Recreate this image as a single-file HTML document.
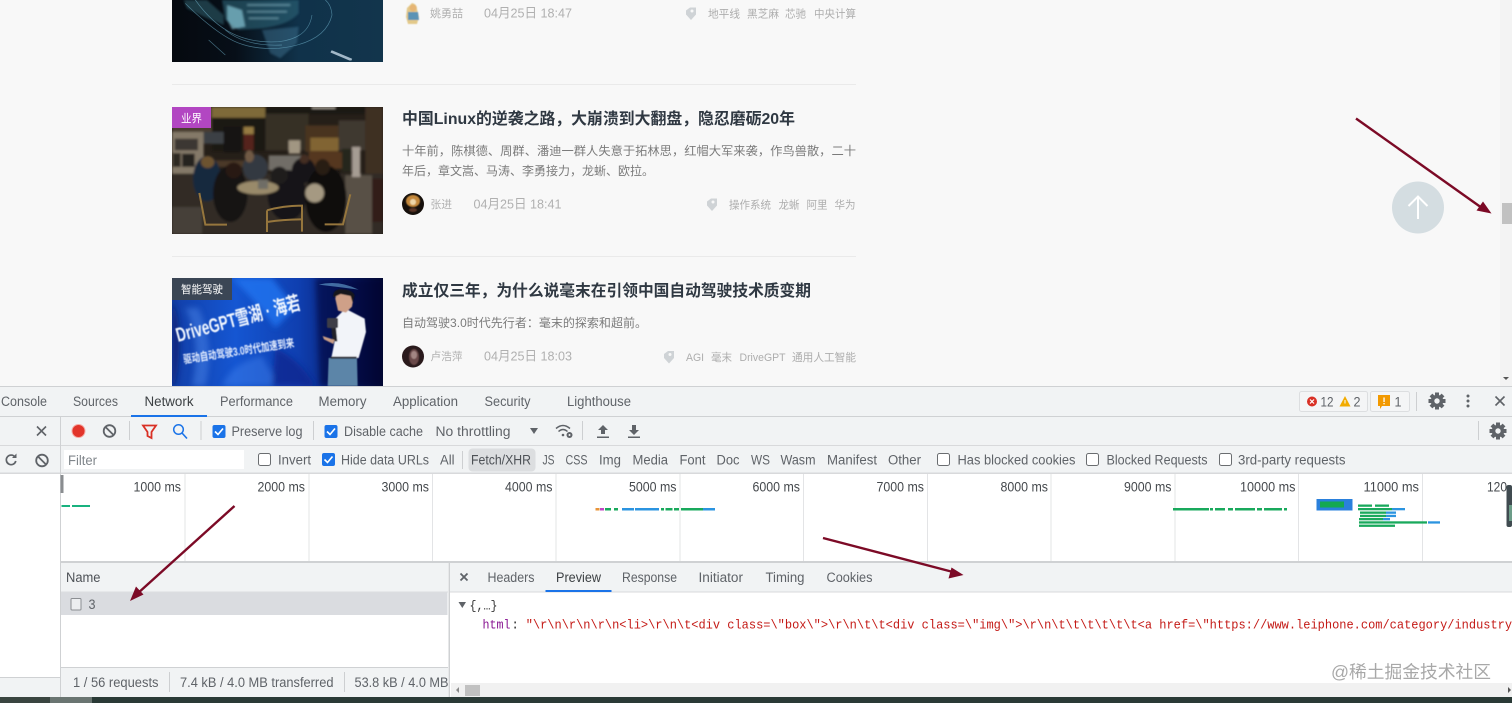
<!DOCTYPE html>
<html lang="zh"><head><meta charset="utf-8"><title>DevTools</title>
<style>
html,body{margin:0;padding:0;width:1512px;height:703px;overflow:hidden;background:#f8f8f8}
svg{display:block;filter:blur(.3px)}
text{font-family:"Liberation Sans","Noto Sans CJK SC",sans-serif;white-space:pre}
.t{font-size:13.5px;fill:#4d5156}
.g{font-size:13.5px;fill:#5f6368}
.o{font-size:13.5px;fill:#45494d}
.m{font-size:13px;font-family:"Liberation Mono",monospace}
.h{font-size:16px;font-weight:700;fill:#2f3842}
.d{font-size:12px;fill:#7b7b7b}
.n{font-size:11px;fill:#b0b0b0}
.dt{font-size:13px;fill:#b0b0b0}
.tg{font-size:11px;fill:#adadad}
.b{font-size:11px;fill:#fff}
</style></head><body>
<svg width="1512" height="703" viewBox="0 0 1512 703" xmlns="http://www.w3.org/2000/svg">
<defs>
<filter id="b1" x="-5%" y="-5%" width="110%" height="110%"><feGaussianBlur stdDeviation="3.200"/></filter>
<filter id="b2" x="-20%" y="-20%" width="140%" height="140%"><feGaussianBlur stdDeviation="9"/></filter>
<filter id="b3" x="-5%" y="-5%" width="110%" height="110%"><feGaussianBlur stdDeviation=".45"/></filter>
<clipPath id="c1"><rect x="172" y="0" width="211" height="62"/></clipPath>
<clipPath id="c2"><rect x="172" y="107" width="211" height="127"/></clipPath>
<clipPath id="c3"><rect x="172" y="278" width="211" height="108"/></clipPath>
<clipPath id="a1"><circle cx="413" cy="204" r="11"/></clipPath>
<clipPath id="a2"><circle cx="413" cy="356.500" r="11"/></clipPath>
<clipPath id="st"><rect x="60" y="668" width="388" height="29"/></clipPath>
<linearGradient id="bl" x1="0" y1="0" x2="1" y2="0"><stop offset="0" stop-color="#123fa8"/><stop offset=".3" stop-color="#1556d2"/><stop offset=".6" stop-color="#0f3fb0"/><stop offset=".8" stop-color="#0a237a"/><stop offset="1" stop-color="#040b34"/></linearGradient>
<linearGradient id="dk" x1="0" y1="0" x2="1" y2="0"><stop offset="0" stop-color="#05090f"/><stop offset=".3" stop-color="#070f18"/><stop offset=".6" stop-color="#10324a"/><stop offset="1" stop-color="#12354c"/></linearGradient>
<path id="tag" d="M-5-3L-1-6H5V1L0 6.500-5 1z" fill="#cfd3d6"/>
</defs>

<rect width="1512" height="703" fill="#f8f8f8"/>
<rect x="1500" y="0" width="12" height="386" fill="#f3f3f3"/>
<rect x="1502" y="203" width="10" height="21" fill="#c1c1c1"/>
<path d="M1503 377h6l-3 3z" fill="#555"/>

<!-- image 1 -->
<g clip-path="url(#c1)">
<rect x="172" y="0" width="211" height="62" fill="url(#dk)"/>
<g transform="translate(172 0) scale(.3333)" fill="none">
<g filter="url(#b1)">
<path d="M270 90l110-10-5 50-50 45-30-15z" fill="#3d7290" opacity=".5"/>
<path d="M35 0h70l50 45v30l-60-25-50-25z" fill="#2d5a68" opacity=".6"/>
<path d="M150 0h230v40q-30 35-110 45l-70 5-40-30z" fill="#2f6678" opacity=".6"/>
<path d="M165 15l45 15 10 50-40 8-15-30z" fill="#8fd0de" opacity=".65"/>
<path d="M225 15h130M225 35h120M230 55h90" stroke="#a5dbe6" stroke-width="5" opacity=".45"/>
</g>
<g stroke="#6fb0c8" stroke-width="2" opacity=".6" filter="url(#b3)">
<path d="M40 10q70 70 130 105t150 30q140-15 160-100-2-30-20-45"/>
<path d="M70 0q50 70 110 100t140 25q90-10 100-80"/>
<path d="M160 90q60 50 170 45"/>
<path d="M110 120l50 45"/>
</g>
<path d="M477 154l62 26" stroke="#a2b8c8" stroke-width="8" filter="url(#b3)"/>
</g></g>

<!-- image 2 -->
<g clip-path="url(#c2)">
<rect x="172" y="107" width="211" height="127" fill="#2a241d"/>
<g transform="translate(172 107) scale(.3333)" filter="url(#b1)">
<rect x="120" y="0" width="160" height="40" fill="#a08848"/>
<rect x="120" y="32" width="170" height="100" fill="#1c1a16"/>
<rect x="0" y="0" width="120" height="75" fill="#5a4d3c"/>
<rect x="280" y="0" width="300" height="20" fill="#1f1a14"/>
<rect x="420" y="0" width="70" height="5" fill="#e9e4d8"/>
<rect x="280" y="20" width="130" height="110" fill="#3f3b2e"/>
<rect x="400" y="55" width="100" height="80" fill="#5a4026"/>
<rect x="415" y="92" width="85" height="40" fill="#a5813f"/>
<rect x="500" y="40" width="80" height="90" fill="#4d463c"/>
<rect x="580" y="0" width="53" height="240" fill="#4c3b2c"/>
<rect x="0" y="75" width="95" height="125" fill="#a99d88"/>
<rect x="8" y="95" width="70" height="35" fill="#4a4540"/>
<rect x="2" y="138" width="24" height="42" fill="#34302b"/>
<rect x="30" y="140" width="38" height="40" fill="#2c2925"/>
<rect x="95" y="75" width="60" height="35" fill="#4a5158"/>
<rect x="155" y="60" width="50" height="75" fill="#141414"/>
<rect x="215" y="60" width="30" height="22" fill="#c09f55"/><rect x="215" y="82" width="30" height="48" fill="#6a2b22"/>
<rect x="290" y="145" width="100" height="45" fill="#8f8d86"/>
<rect x="350" y="100" width="35" height="40" fill="#cfc3aa"/>
<rect x="130" y="160" width="90" height="20" fill="#5c4630"/>
<rect x="410" y="135" width="100" height="50" fill="#6a4526"/>
<rect x="0" y="200" width="633" height="181" fill="#3a362f"/>
<rect x="520" y="205" width="80" height="176" fill="#6e665a"/>
<rect x="0" y="300" width="90" height="81" fill="#56514a"/>
<rect x="600" y="215" width="33" height="130" fill="#3a241c"/>
<rect x="540" y="120" width="25" height="90" fill="#d5cbc0"/>
<rect x="510" y="125" width="28" height="70" fill="#2a2e24"/>
<ellipse cx="105" cy="215" rx="42" ry="68" fill="#17304f"/>
<ellipse cx="107" cy="165" rx="20" ry="18" fill="#8a6a3c"/>
<ellipse cx="250" cy="182" rx="38" ry="40" fill="#3c4752"/>
<ellipse cx="232" cy="148" rx="14" ry="18" fill="#8f7358"/>
<ellipse cx="395" cy="190" rx="36" ry="38" fill="#12161f"/>
<ellipse cx="397" cy="156" rx="14" ry="14" fill="#53372a"/>
<ellipse cx="175" cy="260" rx="52" ry="85" fill="#121216"/>
<ellipse cx="185" cy="190" rx="24" ry="24" fill="#2e1a14"/>
<ellipse cx="345" cy="265" rx="58" ry="76" fill="#15161a"/>
<ellipse cx="322" cy="205" rx="26" ry="26" fill="#222"/>
<ellipse cx="462" cy="275" rx="62" ry="100" fill="#0d0d10"/>
<ellipse cx="452" cy="180" rx="22" ry="24" fill="#2d2019"/>
<ellipse cx="258" cy="242" rx="62" ry="20" fill="#c5b38a"/>
<ellipse cx="428" cy="258" rx="28" ry="28" fill="#d4c7aa"/>
<rect x="258" y="218" width="30" height="28" fill="#8d8d84"/>
</g>
<rect x="172" y="107" width="211" height="127" fill="#17110b" opacity=".25"/>
<g transform="translate(172 107) scale(.3333)" fill="none" stroke="#96763c" stroke-width="6" filter="url(#b3)">
<path d="M82 258l18 95h65"/>
<path d="M285 310q50-14 105-14v78M285 310v65M285 345q50-8 105-8"/>
<path d="M535 262l-22 90h-55"/>
</g></g>
<rect x="172" y="107" width="39" height="21" fill="#b246c2"/>
<text class="b" x="181" y="122" textLength="21" lengthAdjust="spacingAndGlyphs">业界</text>

<!-- image 3 -->
<g clip-path="url(#c3)">
<rect x="172" y="278" width="211" height="108" fill="url(#bl)"/>
<g transform="translate(172 278) scale(.3333)">
<g filter="url(#b2)">
<path d="M0 60q40 90 10 264H0z" fill="#0b2170" opacity=".8"/>
<path d="M40 90q50 100 20 234h40q30-120-20-234z" fill="#4e8aec" opacity=".45"/>
<path d="M180 0q80 80 130 150l60-60-70-90z" fill="#1e74f0" opacity=".8"/>
<path d="M150 324q30-70 120-90l50 90z" fill="#3f80ec" opacity=".45"/>
<path d="M310 210q70 30 120 114h-130z" fill="#0a2690" opacity=".8"/>
<path d="M430 0h203v324h-190z" fill="#040a30" opacity=".55"/>
</g>
<path d="M440 20q60-15 120 15-60-8-120-15z" fill="#7fc8f0" opacity=".5" filter="url(#b3)"/>
</g>
<g filter="url(#b3)">
<text x="178" y="342" transform="rotate(-15 178 342)" font-size="20" font-weight="700" fill="#f3f8ff" textLength="128" lengthAdjust="spacingAndGlyphs">DriveGPT雪湖 · 海若</text>
<text x="184" y="363.500" transform="rotate(-8.700 184 363.500)" font-size="11.500" font-weight="700" fill="#e8f0ff" textLength="112" lengthAdjust="spacingAndGlyphs">驱动自动驾驶3.0时代加速到来</text>
<g transform="translate(172 278) scale(.3333)">
<path d="M470 240h85l2 84h-90z" fill="#5b85a8"/>
<path d="M520 92l58 30 4 40-22 78h-82l10-50-6-60z" fill="#f2f4f9"/>
<path d="M490 62q4-28 30-26l26 16-6 34-18 18-24-6z" fill="#cfa088"/>
<path d="M484 58q-2-26 28-24 28 0 36 18l-6 22-6-20-30-6z" fill="#15151a"/>
<rect x="465" y="120" width="33" height="30" rx="4" fill="#3c3c46"/>
<path d="M478 150h14l4 40h-14z" fill="#23232c"/>
<path d="M452 174l36 12-4 12-28-14z" fill="#c99d85"/>
<rect x="476" y="236" width="78" height="6" fill="#2a2a30"/>
</g></g></g>
<rect x="172" y="278" width="60" height="22" fill="#3b4655"/>
<text class="b" x="181" y="293" textLength="42" lengthAdjust="spacingAndGlyphs" fill="#dfe3e8">智能驾驶</text>

<!-- article rows -->
<rect x="172" y="84" width="684" height="1" fill="#eaeaea"/>
<rect x="172" y="256" width="684" height="1" fill="#eaeaea"/>

<g filter="url(#b3)">
<path d="M412 3q5 1 5 6l2 8-2 7h-9l-2-7 1-9z" fill="#e3c98a"/><path d="M408 12h10l1 8h-11z" fill="#5c93b5"/><circle cx="413" cy="8" r="3.500" fill="#e6b574"/>
</g>
<text class="n" x="430" y="17" textLength="33" lengthAdjust="spacingAndGlyphs">姚勇喆</text>
<text class="dt" x="484" y="17.500" textLength="88" lengthAdjust="spacingAndGlyphs">04月25日 18:47</text>
<use href="#tag" transform="translate(691 13.500)"/><circle cx="692" cy="11" r="1.500" fill="#f8f8f8"/>
<text class="tg" x="708" y="17.500" textLength="32" lengthAdjust="spacingAndGlyphs">地平线</text>
<text class="tg" x="747" y="17.500" textLength="32" lengthAdjust="spacingAndGlyphs">黑芝麻</text>
<text class="tg" x="785" y="17.500" textLength="21" lengthAdjust="spacingAndGlyphs">芯驰</text>
<text class="tg" x="814" y="17.500" textLength="42" lengthAdjust="spacingAndGlyphs">中央计算</text>

<text class="h" x="402" y="124" textLength="393" lengthAdjust="spacingAndGlyphs">中国Linux的逆袭之路，大崩溃到大翻盘，隐忍磨砺20年</text>
<text class="d" x="402" y="155" textLength="454" lengthAdjust="spacingAndGlyphs">十年前，陈棋德、周群、潘迪一群人失意于拓林思，红帽大军来袭，作鸟兽散，二十</text>
<text class="d" x="402" y="175" textLength="252" lengthAdjust="spacingAndGlyphs">年后，章文嵩、马涛、李勇接力，龙蜥、欧拉。</text>
<g clip-path="url(#a1)"><rect x="402" y="193" width="22" height="22" fill="#16100c"/><g filter="url(#b3)"><ellipse cx="413" cy="201" rx="7" ry="6" fill="#c4883a"/><ellipse cx="413" cy="202" rx="3" ry="3" fill="#eed6a8"/><ellipse cx="413" cy="210" rx="4" ry="2" fill="#5a3626"/></g></g>
<text class="n" x="430.500" y="208" textLength="21.500" lengthAdjust="spacingAndGlyphs">张进</text>
<text class="dt" x="473.500" y="208.500" textLength="88" lengthAdjust="spacingAndGlyphs">04月25日 18:41</text>
<use href="#tag" transform="translate(712 204.500)"/><circle cx="713" cy="202" r="1.500" fill="#f8f8f8"/>
<text class="tg" x="729" y="208.500" textLength="42" lengthAdjust="spacingAndGlyphs">操作系统</text>
<text class="tg" x="778.500" y="208.500" textLength="21" lengthAdjust="spacingAndGlyphs">龙蜥</text>
<text class="tg" x="806.500" y="208.500" textLength="21" lengthAdjust="spacingAndGlyphs">阿里</text>
<text class="tg" x="834.500" y="208.500" textLength="21" lengthAdjust="spacingAndGlyphs">华为</text>

<text class="h" x="402" y="296" textLength="409" lengthAdjust="spacingAndGlyphs">成立仅三年，为什么说毫末在引领中国自动驾驶技术质变期</text>
<text class="d" x="402" y="327" textLength="245" lengthAdjust="spacingAndGlyphs">自动驾驶3.0时代先行者：毫末的探索和超前。</text>
<g clip-path="url(#a2)"><rect x="402" y="345" width="22" height="23" fill="#2a1a1c"/><g filter="url(#b3)"><ellipse cx="414" cy="357" rx="5" ry="8" fill="#6b4a48"/><ellipse cx="414" cy="355" rx="3" ry="4" fill="#a38683"/></g></g>
<text class="n" x="430.500" y="360" textLength="32" lengthAdjust="spacingAndGlyphs">卢浩萍</text>
<text class="dt" x="484" y="360.500" textLength="88" lengthAdjust="spacingAndGlyphs">04月25日 18:03</text>
<use href="#tag" transform="translate(669 357)"/><circle cx="670" cy="354.500" r="1.500" fill="#f8f8f8"/>
<text class="tg" x="686" y="361" textLength="18" lengthAdjust="spacingAndGlyphs">AGI</text>
<text class="tg" x="711" y="361" textLength="21" lengthAdjust="spacingAndGlyphs">毫末</text>
<text class="tg" x="739.500" y="361" textLength="46" lengthAdjust="spacingAndGlyphs">DriveGPT</text>
<text class="tg" x="792" y="361" textLength="64" lengthAdjust="spacingAndGlyphs">通用人工智能</text>

<!-- back to top -->
<circle cx="1418" cy="207.500" r="26" fill="#d4dde1"/>
<path d="M1418 219v-23M1408.500 206l9.500-9.500 9.500 9.500" stroke="#fff" stroke-width="2" fill="none"/>

<!-- DEVTOOLS -->
<rect x="0" y="386" width="1512" height="317" fill="#fff"/>
<rect x="0" y="386" width="1512" height="1" fill="#cfd1d3"/>
<rect x="0" y="387" width="1512" height="86" fill="#f1f3f4"/>
<rect x="0" y="416" width="1512" height="1" fill="#cfd1d3"/>
<rect x="0" y="445" width="1512" height="1" fill="#d8d9db"/>
<rect x="0" y="472.500" width="1512" height="1.500" fill="#d8d9db"/>
<rect x="60" y="417" width="1" height="280" fill="#cfd1d3"/>

<!-- tabs -->
<text class="g" x="1" y="406" textLength="46" lengthAdjust="spacingAndGlyphs">Console</text>
<text class="g" x="73" y="406" textLength="45" lengthAdjust="spacingAndGlyphs">Sources</text>
<text class="t" x="144.500" y="406" textLength="49" lengthAdjust="spacingAndGlyphs" style="fill:#3c4043">Network</text>
<rect x="131" y="415" width="76" height="2" fill="#1a73e8"/>
<text class="g" x="220" y="406" textLength="73" lengthAdjust="spacingAndGlyphs">Performance</text>
<text class="g" x="318.500" y="406" textLength="48" lengthAdjust="spacingAndGlyphs">Memory</text>
<text class="g" x="393" y="406" textLength="65" lengthAdjust="spacingAndGlyphs">Application</text>
<text class="g" x="484.500" y="406" textLength="46" lengthAdjust="spacingAndGlyphs">Security</text>
<text class="g" x="567" y="406" textLength="64" lengthAdjust="spacingAndGlyphs">Lighthouse</text>

<!-- top right -->
<rect x="1299.500" y="391.500" width="68" height="20" rx="2" fill="#f4f5f6" stroke="#dcdee0"/>
<circle cx="1312" cy="401.500" r="5" fill="#d93025"/><path d="M1310 399.500l4 4M1314 399.500l-4 4" stroke="#fff" stroke-width="1.200"/>
<text class="g" x="1320.500" y="406.500" textLength="13" lengthAdjust="spacingAndGlyphs">12</text>
<path d="M1345 396l5.500 10.500h-11z" fill="#f2ab00"/><rect x="1344.500" y="400" width="1" height="3.500" fill="#fff"/>
<text class="g" x="1353.500" y="406.500" textLength="7" lengthAdjust="spacingAndGlyphs">2</text>
<rect x="1370.500" y="391.500" width="39" height="20" rx="2" fill="#f4f5f6" stroke="#dcdee0"/>
<path d="M1378 395h12v11h-8l-2 3v-3h-2z" fill="#f29900"/><rect x="1383.400" y="397.500" width="1.300" height="4.500" fill="#fff"/><rect x="1383.400" y="403" width="1.300" height="1.300" fill="#fff"/>
<text class="g" x="1394.500" y="406.500" textLength="7" lengthAdjust="spacingAndGlyphs">1</text>
<rect x="1416" y="392" width="1" height="19" fill="#cdcfd1"/>
<g id="gear" fill="#5f6368">
<circle cx="1437" cy="401" r="6.300"/>
<g id="teeth"><rect x="1435" y="392.500" width="4" height="17"/><rect x="1428.500" y="399" width="17" height="4"/><rect x="1435" y="392.500" width="4" height="17" transform="rotate(45 1437 401)"/><rect x="1435" y="392.500" width="4" height="17" transform="rotate(-45 1437 401)"/></g>
<circle cx="1437" cy="401" r="2.700" fill="#f1f3f4"/>
</g>
<circle cx="1468" cy="396" r="1.500" fill="#5f6368"/><circle cx="1468" cy="401" r="1.500" fill="#5f6368"/><circle cx="1468" cy="406" r="1.500" fill="#5f6368"/>
<path d="M1495.500 396.500l9 9M1504.500 396.500l-9 9" stroke="#5f6368" stroke-width="1.600"/>
<rect x="1478" y="421" width="1" height="19" fill="#cdcfd1"/>
<use href="#gear" transform="translate(61 30)"/>

<!-- toolbar -->
<path d="M37 426.500l9 9M46 426.500l-9 9" stroke="#5f6368" stroke-width="1.600"/>
<circle cx="78.500" cy="431" r="6.500" fill="#e2342a" stroke="#f5a9a3" stroke-width="1"/>
<circle cx="109.500" cy="431" r="5.800" fill="none" stroke="#5f6368" stroke-width="1.800"/><path d="M105.500 427l8 8" stroke="#5f6368" stroke-width="1.800"/>
<rect x="129" y="421" width="1" height="19" fill="#cdcfd1"/>
<path d="M143 425.500h13l-4.500 6.500v6l-4-2v-4z" fill="none" stroke="#d93025" stroke-width="1.800"/>
<circle cx="178.500" cy="429.500" r="4.800" fill="none" stroke="#1a73e8" stroke-width="1.500"/><path d="M182 433l5 5.500" stroke="#1a73e8" stroke-width="1.600"/>
<rect x="200.500" y="421" width="1" height="19" fill="#cdcfd1"/>
<rect x="212.500" y="425" width="13" height="13" rx="2" fill="#1a73e8"/><path d="M215 431.500l3 3 5-6" stroke="#fff" stroke-width="1.600" fill="none"/>
<text class="g" x="231.500" y="436" textLength="71" lengthAdjust="spacingAndGlyphs">Preserve log</text>
<rect x="313" y="421" width="1" height="19" fill="#cdcfd1"/>
<rect x="324.500" y="425" width="13" height="13" rx="2" fill="#1a73e8"/><path d="M327 431.500l3 3 5-6" stroke="#fff" stroke-width="1.600" fill="none"/>
<text class="g" x="344" y="436" textLength="79" lengthAdjust="spacingAndGlyphs">Disable cache</text>
<text class="g" x="435.500" y="436" textLength="75" lengthAdjust="spacingAndGlyphs">No throttling</text>
<path d="M530 428h8l-4 6z" fill="#5f6368"/>
<path d="M556 428.500q7-6 14 0M558.500 431.500q4.500-4 9 0" fill="none" stroke="#5f6368" stroke-width="1.500"/><circle cx="563" cy="435" r="1.300" fill="#5f6368"/><circle cx="569.500" cy="435" r="3" fill="#5f6368"/><circle cx="569.500" cy="435" r="1" fill="#f1f3f4"/>
<rect x="582" y="421" width="1" height="19" fill="#cdcfd1"/>
<path d="M603 425l5 5h-3v4h-4v-4h-3zM597 436.500h12v1.500h-12z" fill="#5f6368"/>
<path d="M634 435l-5-5h3v-5h4v5h3zM628 436.500h12v1.500h-12z" fill="#5f6368"/>

<!-- filter row -->
<path d="M15 457a4.800 4.800 0 1 0 .8 4" fill="none" stroke="#5f6368" stroke-width="1.700"/><path d="M16.500 453.500v4.500h-4.500z" fill="#5f6368"/>
<circle cx="42" cy="460.500" r="5.800" fill="none" stroke="#5f6368" stroke-width="1.800"/><path d="M38 456.500l8 8" stroke="#5f6368" stroke-width="1.800"/>
<rect x="64" y="450" width="180" height="19" fill="#fff"/>
<text x="68" y="465" font-size="13.500" fill="#80868b" textLength="29" lengthAdjust="spacingAndGlyphs">Filter</text>
<rect x="258.500" y="453.500" width="12" height="12" rx="2" fill="#fff" stroke="#6a6d70"/>
<text class="g" x="278" y="464.500" textLength="33" lengthAdjust="spacingAndGlyphs">Invert</text>
<rect x="322" y="453" width="13" height="13" rx="2" fill="#1a73e8"/><path d="M324.500 459.500l3 3 5-6" stroke="#fff" stroke-width="1.600" fill="none"/>
<text class="g" x="341" y="464.500" textLength="88" lengthAdjust="spacingAndGlyphs">Hide data URLs</text>
<text class="g" x="440" y="464.500" textLength="14.500" lengthAdjust="spacingAndGlyphs">All</text>
<rect x="462" y="451" width="1" height="18" fill="#cdcfd1"/>
<rect x="468.500" y="448.500" width="67" height="23" rx="4" fill="#dcdee0"/>
<text class="t" x="471" y="464.500" textLength="60" lengthAdjust="spacingAndGlyphs">Fetch/XHR</text>
<text class="g" x="542.500" y="464.500" textLength="12" lengthAdjust="spacingAndGlyphs">JS</text>
<text class="g" x="565.500" y="464.500" textLength="22" lengthAdjust="spacingAndGlyphs">CSS</text>
<text class="g" x="599" y="464.500" textLength="22" lengthAdjust="spacingAndGlyphs">Img</text>
<text class="g" x="632.500" y="464.500" textLength="35.500" lengthAdjust="spacingAndGlyphs">Media</text>
<text class="g" x="679.500" y="464.500" textLength="26" lengthAdjust="spacingAndGlyphs">Font</text>
<text class="g" x="716.500" y="464.500" textLength="23" lengthAdjust="spacingAndGlyphs">Doc</text>
<text class="g" x="751" y="464.500" textLength="19" lengthAdjust="spacingAndGlyphs">WS</text>
<text class="g" x="780.500" y="464.500" textLength="35" lengthAdjust="spacingAndGlyphs">Wasm</text>
<text class="g" x="827" y="464.500" textLength="50" lengthAdjust="spacingAndGlyphs">Manifest</text>
<text class="g" x="888" y="464.500" textLength="33" lengthAdjust="spacingAndGlyphs">Other</text>
<rect x="937.500" y="453.500" width="12" height="12" rx="2" fill="#fff" stroke="#6a6d70"/>
<text class="g" x="957.500" y="464.500" textLength="118" lengthAdjust="spacingAndGlyphs">Has blocked cookies</text>
<rect x="1086.500" y="453.500" width="12" height="12" rx="2" fill="#fff" stroke="#6a6d70"/>
<text class="g" x="1106.500" y="464.500" textLength="101" lengthAdjust="spacingAndGlyphs">Blocked Requests</text>
<rect x="1219.500" y="453.500" width="12" height="12" rx="2" fill="#fff" stroke="#6a6d70"/>
<text class="g" x="1238" y="464.500" textLength="107.500" lengthAdjust="spacingAndGlyphs">3rd-party requests</text>

<!-- overview -->
<g fill="#e3e4e6">
<rect x="184.500" y="474" width="1" height="87"/><rect x="308.500" y="474" width="1" height="87"/><rect x="432" y="474" width="1" height="87"/><rect x="555.500" y="474" width="1" height="87"/><rect x="679.500" y="474" width="1" height="87"/><rect x="803" y="474" width="1" height="87"/><rect x="927" y="474" width="1" height="87"/><rect x="1050.500" y="474" width="1" height="87"/><rect x="1174.500" y="474" width="1" height="87"/><rect x="1298" y="474" width="1" height="87"/><rect x="1422" y="474" width="1" height="87"/>
</g>
<rect x="60.500" y="475" width="3" height="18" fill="#8a8d90"/>
<text class="o" x="133.500" y="491.500" textLength="47.500" lengthAdjust="spacingAndGlyphs">1000 ms</text>
<text class="o" x="257.500" y="491.500" textLength="47.500" lengthAdjust="spacingAndGlyphs">2000 ms</text>
<text class="o" x="381.500" y="491.500" textLength="47.500" lengthAdjust="spacingAndGlyphs">3000 ms</text>
<text class="o" x="505" y="491.500" textLength="47.500" lengthAdjust="spacingAndGlyphs">4000 ms</text>
<text class="o" x="629" y="491.500" textLength="47.500" lengthAdjust="spacingAndGlyphs">5000 ms</text>
<text class="o" x="752.500" y="491.500" textLength="47.500" lengthAdjust="spacingAndGlyphs">6000 ms</text>
<text class="o" x="876.500" y="491.500" textLength="47.500" lengthAdjust="spacingAndGlyphs">7000 ms</text>
<text class="o" x="1000.500" y="491.500" textLength="47.500" lengthAdjust="spacingAndGlyphs">8000 ms</text>
<text class="o" x="1124" y="491.500" textLength="47.500" lengthAdjust="spacingAndGlyphs">9000 ms</text>
<text class="o" x="1240" y="491.500" textLength="55.500" lengthAdjust="spacingAndGlyphs">10000 ms</text>
<text class="o" x="1363.500" y="491.500" textLength="55.500" lengthAdjust="spacingAndGlyphs">11000 ms</text>
<text class="o" x="1487" y="491.500" textLength="20" lengthAdjust="spacingAndGlyphs">120</text>
<rect x="1506.500" y="485" width="5.500" height="42" rx="2" fill="#404b50"/><rect x="1509" y="505" width="3" height="16" fill="#6c9c88"/>
<!-- waterfall -->
<g>
<rect x="61.500" y="505" width="8.500" height="2" fill="#19b27f"/><rect x="72" y="505" width="18" height="2" fill="#19b27f"/>
<rect x="595.500" y="508" width="4" height="2.500" fill="#e8943a"/><rect x="600" y="508" width="4" height="2.500" fill="#c246c4"/><rect x="605" y="508" width="6" height="2.500" fill="#19a95c"/><rect x="614" y="508" width="4" height="2.500" fill="#19a95c"/>
<rect x="622" y="508" width="12" height="2.500" fill="#2b94e0"/><rect x="635" y="508" width="24" height="2.500" fill="#2b94e0"/><rect x="661" y="508" width="3" height="2.500" fill="#19a95c"/>
<rect x="665.500" y="508" width="7" height="2.500" fill="#19a95c"/><rect x="674" y="508" width="5" height="2.500" fill="#19a95c"/><rect x="681" y="508" width="22" height="2.500" fill="#19a95c"/><rect x="703" y="508" width="12" height="2.500" fill="#2b94e0"/>
<rect x="1173" y="508" width="36" height="2.500" fill="#19a95c"/><rect x="1210" y="508" width="3" height="2.500" fill="#19a95c"/><rect x="1215" y="508" width="10" height="2.500" fill="#19a95c"/><rect x="1228" y="508" width="5" height="2.500" fill="#19a95c"/><rect x="1235" y="508" width="20" height="2.500" fill="#19a95c"/><rect x="1257" y="508" width="5" height="2.500" fill="#19a95c"/><rect x="1264" y="508" width="18" height="2.500" fill="#19a95c"/><rect x="1284" y="508" width="3" height="2.500" fill="#19a95c"/>
<rect x="1316.500" y="499" width="36" height="11.500" fill="#2a80dc"/><rect x="1320" y="501.500" width="24" height="6" fill="#14a850"/>
<rect x="1358" y="504.500" width="14" height="2.300" fill="#19a95c"/><rect x="1375" y="504.500" width="14" height="2.300" fill="#19a95c"/>
<rect x="1358" y="508" width="34" height="2.300" fill="#19a95c"/><rect x="1392" y="508" width="13" height="2.300" fill="#2b94e0"/>
<rect x="1360" y="511.500" width="26" height="2.300" fill="#19a95c"/><rect x="1386" y="511.500" width="10" height="2.300" fill="#2b94e0"/>
<rect x="1360" y="514.800" width="26" height="2.300" fill="#19a95c"/><rect x="1386" y="514.800" width="10" height="2.300" fill="#2b94e0"/>
<rect x="1359" y="518" width="24" height="2.300" fill="#19a95c"/><rect x="1383" y="518" width="7" height="2.300" fill="#2b94e0"/>
<rect x="1359" y="521.300" width="68" height="2.300" fill="#19a95c"/><rect x="1428" y="521.300" width="12" height="2.300" fill="#2b94e0"/>
<rect x="1359" y="524.600" width="36" height="2.300" fill="#19a95c"/>
</g>
<rect x="60" y="561" width="1452" height="2" fill="#cfd1d3"/>

<!-- left col -->
<rect x="0" y="677" width="60" height="1" fill="#cfd1d3"/><rect x="0" y="678" width="60" height="19" fill="#f1f3f4"/>

<!-- name panel -->
<rect x="61" y="563" width="387" height="29" fill="#f1f3f4"/>
<rect x="61" y="591.500" width="387" height="1" fill="#dcdee0"/>
<text class="t" x="66" y="582" textLength="34.500" lengthAdjust="spacingAndGlyphs">Name</text>
<rect x="61" y="592.500" width="386.500" height="22.500" fill="#dadce0"/>
<rect x="71" y="598.500" width="10" height="11.500" rx="1" fill="#eceef0" stroke="#8b8e92"/>
<text class="g" x="88.500" y="609" textLength="7" lengthAdjust="spacingAndGlyphs">3</text>
<rect x="61" y="667" width="387" height="1" fill="#cfd1d3"/>
<rect x="61" y="668" width="387" height="29" fill="#f1f3f4"/>
<g clip-path="url(#st)">
<text class="g" x="73" y="687" textLength="85.500" lengthAdjust="spacingAndGlyphs">1 / 56 requests</text>
<rect x="169" y="672" width="1" height="20" fill="#cdcfd1"/>
<text class="g" x="180" y="687" textLength="153.500" lengthAdjust="spacingAndGlyphs">7.4 kB / 4.0 MB transferred</text>
<rect x="344" y="672" width="1" height="20" fill="#cdcfd1"/>
<text class="g" x="354.500" y="687" textLength="94" lengthAdjust="spacingAndGlyphs">53.8 kB / 4.0 MB</text>
</g>
<rect x="448.500" y="563" width="1.500" height="134" fill="#cfd1d3"/>

<!-- preview panel -->
<rect x="450" y="563" width="1062" height="29" fill="#f1f3f4"/>
<rect x="450" y="591.500" width="1062" height="1" fill="#d8d9db"/>
<path d="M460.500 573.500l7 7M467.500 573.500l-7 7" stroke="#5f6368" stroke-width="1.800"/>
<text class="g" x="487.500" y="582" textLength="47" lengthAdjust="spacingAndGlyphs">Headers</text>
<text class="t" x="556" y="582" textLength="45" lengthAdjust="spacingAndGlyphs" style="fill:#3c4043">Preview</text>
<rect x="545.500" y="590" width="66" height="2" fill="#1a73e8"/>
<text class="g" x="622" y="582" textLength="55" lengthAdjust="spacingAndGlyphs">Response</text>
<text class="g" x="698.500" y="582" textLength="44.500" lengthAdjust="spacingAndGlyphs">Initiator</text>
<text class="g" x="765.500" y="582" textLength="39" lengthAdjust="spacingAndGlyphs">Timing</text>
<text class="g" x="826.500" y="582" textLength="46" lengthAdjust="spacingAndGlyphs">Cookies</text>
<path d="M458.500 602h7.500l-3.700 6z" fill="#5f6368"/>
<text class="m" x="469.500" y="609.500" fill="#333" textLength="28" lengthAdjust="spacingAndGlyphs">{,…}</text>
<text class="m" x="482.500" y="628.500" fill="#881391" textLength="28" lengthAdjust="spacingAndGlyphs">html</text><text class="m" x="511.300" y="628.500" fill="#333">:</text>
<text class="m" x="525.700" y="628.500" fill="#c41a16" textLength="986.400" lengthAdjust="spacingAndGlyphs">"\r\n\r\n\r\n&lt;li&gt;\r\n\t&lt;div class=\"box\"&gt;\r\n\t\t&lt;div class=\"img\"&gt;\r\n\t\t\t\t\t\t&lt;a href=\"https://www.leiphone.com/category/industry</text>
<rect x="451" y="683" width="1061" height="14" fill="#f1f1f1"/>
<rect x="465" y="685" width="15" height="11" fill="#c1c1c1"/>
<path d="M459 687v6l-3-3z" fill="#8a8a8a"/><path d="M1508 687v6l3-3z" fill="#555"/>
<text x="1331" y="678" font-size="17.500" fill="#a8a8a8" textLength="160" lengthAdjust="spacingAndGlyphs">@稀土掘金技术社区</text>

<!-- taskbar -->
<rect x="0" y="697" width="1512" height="6" fill="#2a3a36"/>
<rect x="0" y="697" width="50" height="6" fill="#3a4540"/>
<rect x="50" y="697" width="42" height="6" fill="#6a7571"/>

<!-- arrows -->
<g stroke="#7c0a26" stroke-width="2.400" fill="#7c0a26">
<path d="M1356 118.500L1482 208"/><path d="M1491.500 213.500l-15-3 6.500-9z" stroke="none"/>
<path d="M234.500 506L137 594"/><path d="M130 601l6-14.500 7.500 8z" stroke="none"/>
<path d="M823 538l130 34"/><path d="M963.500 575l-15 3.500 3-11z" stroke="none"/>
</g>
</svg>
</body></html>
